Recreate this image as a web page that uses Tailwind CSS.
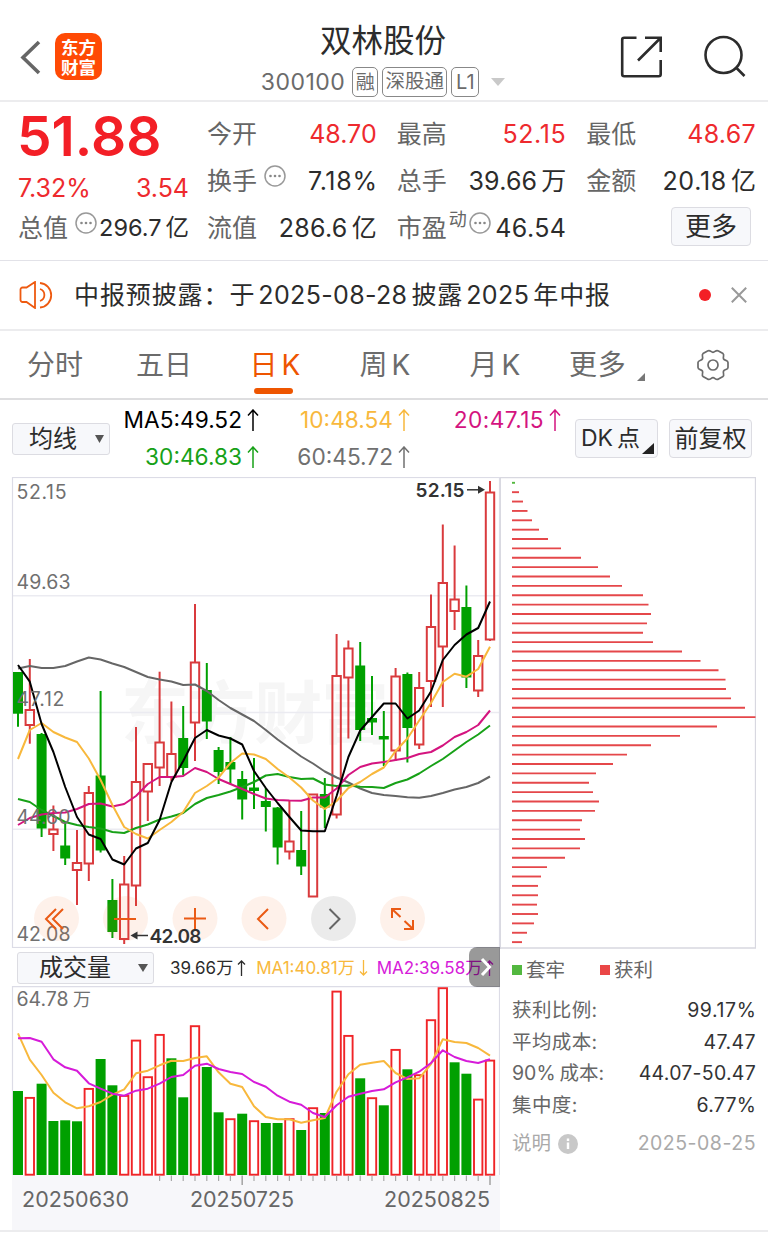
<!DOCTYPE html>
<html lang="zh-CN">
<head>
<meta charset="utf-8">
<title>双林股份 300100</title>
<script src="https://cdn.jsdelivr.net/npm/@tailwindcss/browser@4"></script>
</head>
<body class="w-[768px] h-[1241px] overflow-hidden bg-white font-['Inter','Noto_Sans_CJK_SC',sans-serif] font-[370] text-[#2c2c2c] flex flex-col leading-none whitespace-nowrap">

<!-- Title bar -->
<header class="h-[102px] shrink-0 border-b-2 border-[#ececee] flex justify-between">
  <div class="w-[199px] pt-[33px] pl-[20px] flex items-start">
    <svg class="w-[22px] h-[48px]" viewBox="0 0 22 48" fill="none" stroke="#666" stroke-width="3.6"><path d="M19 9 3 24.5 19 40"/></svg>
    <div class="ml-[13px] w-[47px] h-[47px] rounded-[10px] bg-[#ff4a05] text-white font-['Noto_Sans_CJK_SC',sans-serif] font-bold text-[17.5px] leading-[20px] flex flex-col items-center pt-[4px]"><span>东方</span><span>财富</span></div>
  </div>
  <div class="pt-[24px] flex flex-col items-center">
    <h1 class="text-[31.5px] leading-[34px]">双林股份</h1>
    <div class="mt-[9px] flex items-center h-[30px] text-[#6b6b6b]">
      <span class="text-[23px] tracking-[0.5px]">300100</span>
      <span class="ml-[7px] w-[26px] h-[30px] rounded-[5px] border-[1.5px] border-[#888] flex items-center justify-center text-[19px]">融</span>
      <span class="ml-[4px] w-[65px] h-[30px] rounded-[5px] border-[1.5px] border-[#888] flex items-center justify-center text-[19.5px]">深股通</span>
      <span class="ml-[4px] w-[28px] h-[30px] rounded-[5px] border-[1.5px] border-[#888] flex items-center justify-center text-[20px]">L1</span>
      <svg class="ml-[12px] w-[14px] h-[8px]" viewBox="0 0 14 8"><path d="M0 0h14L7 8z" fill="#c9c9c9"/></svg>
    </div>
  </div>
  <div class="w-[201px] pt-[34px] pr-[21px] flex justify-end items-start">
    <svg class="w-[44px] h-[44px]" viewBox="0 0 44 44" fill="none" stroke="#2c2c2c" stroke-width="2.6"><path d="M17.5 3.8H5.2a2 2 0 0 0-2 2v34.500a2 2 0 0 0 2 2h34.500a2 2 0 0 0 2-2V26M26 3.800h15.700V18M41 4.500 19 26.500"/></svg>
    <svg class="ml-[40px] w-[44px] h-[44px]" viewBox="0 0 44 44" fill="none" stroke="#2c2c2c" stroke-width="2.600"><circle cx="20.500" cy="21" r="18"/><path d="m32.500 33 9 9"/></svg>
  </div>
</header>

<!-- Quote summary -->
<section class="h-[159px] shrink-0 border-b border-[#e2e2e8] px-[18px] pr-[12px] flex text-[25px]">
  <div class="w-[171px] flex flex-col">
    <div class="h-[64px] mt-[2px] -ml-px text-[55px] leading-[64px] font-semibold text-[#f31f26]">51.88</div>
    <div class="h-[38px] mt-px flex items-center justify-between text-[#ee2a2e]"><span>7.32%</span><span>3.54</span></div>
    <div class="h-[42px] flex items-center justify-between">
      <span class="flex text-[#666]">总值<svg class="-mt-[4px] ml-[7px] w-[22px] h-[22px]" viewBox="0 0 22 22"><circle cx="11" cy="11" r="10" fill="none" stroke="#999" stroke-width="1.500"/><g fill="#888"><circle cx="6.500" cy="11" r="1.300"/><circle cx="11" cy="11" r="1.300"/><circle cx="15.500" cy="11" r="1.300"/></g></svg></span>
      <span class="text-[23.500px] flex gap-[4px]"><span>296.7</span><span>亿</span></span>
    </div>
  </div>
  <div class="ml-[18px] w-[549px] grid grid-cols-3 grid-rows-[47px_47px_47px] gap-x-[20px] pt-[9px] items-center">
    <div class="flex justify-between items-center"><span class="text-[#666]">今开</span><span class="text-[#ee2a2e]">48.70</span></div>
    <div class="flex justify-between items-center"><span class="text-[#666]">最高</span><span class="text-[#ee2a2e] tracking-[0.600px]">52.15</span></div>
    <div class="flex justify-between items-center"><span class="text-[#666]">最低</span><span class="text-[#ee2a2e] tracking-[0.300px]">48.67</span></div>
    <div class="flex justify-between items-center"><span class="flex text-[#666]">换手<svg class="-mt-[4px] ml-[7px] w-[22px] h-[22px]" viewBox="0 0 22 22"><circle cx="11" cy="11" r="10" fill="none" stroke="#999" stroke-width="1.500"/><g fill="#888"><circle cx="6.500" cy="11" r="1.300"/><circle cx="11" cy="11" r="1.300"/><circle cx="15.500" cy="11" r="1.300"/></g></svg></span><span class="tracking-[0.700px] -mr-[1px]">7.18%</span></div>
    <div class="flex justify-between items-center"><span class="text-[#666]">总手</span><span class="flex gap-[4px]"><span class="tracking-[0.200px]">39.66</span><span>万</span></span></div>
    <div class="flex justify-between items-center"><span class="text-[#666]">金额</span><span class="flex gap-[4px]"><span class="tracking-[0.700px]">20.18</span><span>亿</span></span></div>
    <div class="flex justify-between items-center"><span class="text-[#666]">流值</span><span class="flex gap-[4px]"><span class="tracking-[0.300px]">286.6</span><span>亿</span></span></div>
    <div class="flex justify-between items-center"><span class="flex text-[#666]">市盈<span class="text-[18px] ml-[2px] -mt-[5px]">动</span><svg class="-mt-[4px] ml-[2px] w-[22px] h-[22px]" viewBox="0 0 22 22"><circle cx="11" cy="11" r="10" fill="none" stroke="#999" stroke-width="1.500"/><g fill="#888"><circle cx="6.500" cy="11" r="1.300"/><circle cx="11" cy="11" r="1.300"/><circle cx="15.500" cy="11" r="1.300"/></g></svg></span><span class="tracking-[0.400px]">46.54</span></div>
    <div class="flex justify-end pr-[5px]"><button class="w-[80px] h-[39px] -mt-[4px] rounded-[4px] border border-[#dcdce2] bg-[#f7f8fb] text-[26px]">更多</button></div>
  </div>
</section>

<!-- Announcement -->
<section class="h-[70px] shrink-0 border-b-2 border-[#ececee] flex items-center pl-[19px] pr-[21px]">
  <svg class="w-[34px] h-[28px]" viewBox="0 0 34 28" fill="none" stroke="#ee5a10" stroke-width="1.800"><path d="M16 1v26l-8.500-6H3.500a2 2 0 0 1-2-2V8.500a2 2 0 0 1 2-2h4zM21 8a6.300 6.300 0 0 1 0 12M21 2a12.300 12.300 0 0 1 0 24.500"/></svg>
  <p class="ml-[21px] text-[25px] flex"><span class="tracking-[0.900px]">中报预披露：于</span><span class="ml-[3px] tracking-[0.350px]">2025-08-28</span><span class="ml-[4px] tracking-[0.900px]">披露</span><span class="ml-[3px] tracking-[0.400px]">2025</span><span class="ml-[4px] tracking-[0.900px]">年中报</span></p>
  <span class="ml-auto w-[12px] h-[12px] rounded-full bg-[#f31f26]"></span>
  <svg class="ml-[20px] w-[16px] h-[16px]" viewBox="0 0 16 16" stroke="#999" stroke-width="2"><path d="m.8.8 14.400 14.400M15.200.8.800 15.200"/></svg>
</section>

<!-- Period tabs -->
<nav class="h-[69px] shrink-0 border-b-2 border-[#dedee0] flex text-[28px] text-[#6b6b6b] leading-[69px]">
  <span class="w-[110px] text-center">分时</span>
  <span class="w-[108px] text-center">五日</span>
  <span class="w-[114px] flex flex-col items-center text-[#ee5500]"><span class="h-[57px] flex gap-[4px]"><span>日</span><span>K</span></span><i class="block w-[39px] h-[6px] rounded-full bg-[#ee5500] mr-[3px]"></i></span>
  <span class="w-[106px] flex justify-center gap-[4px]"><span>周</span><span>K</span></span>
  <span class="w-[114px] flex justify-center gap-[4px]"><span>月</span><span>K</span></span>
  <span class="w-[96px] pl-[17px] flex tracking-[0.800px]">更多<svg class="ml-[10px] mt-[42px] w-[8px] h-[8px] shrink-0" viewBox="0 0 8 8"><path d="M8 0v8H0z" fill="#777"/></svg></span>
  <svg class="ml-[48px] mt-[17px] w-[34px] h-[34px]" viewBox="-17 -17 34 34" fill="none" stroke="#6b6b6b" stroke-width="1.700" stroke-linejoin="round"><circle r="5"/><path d="M-5.500-14c2.500-1.800 3.500 1.300 5.500 1.300S3-15.800 5.500-14l4.500 2.600c1.800 1.500-.5 3.500.6 5.400s4.400 1 4.400 3.500v5c0 2.500-3.300 1.500-4.400 3.500s1.200 3.900-.6 5.400L5.500 14C3 15.800 2 12.700 0 12.700S-3 15.800-5.500 14l-4.500-2.600c-1.800-1.500.5-3.500-.6-5.400s-4.400-1-4.400-3.500v-5c0-2.500 3.300-1.500 4.400-3.500s-1.200-3.900.6-5.400z"/></svg>
</nav>

<!-- Moving averages legend -->
<section class="h-[77px] shrink-0 flex pl-[12px] pr-[16px]">
  <button class="mt-[23px] w-[98px] h-[32px] rounded-[3px] border border-[#dcdce2] bg-[#f7f8fb] flex items-center pl-[16px] text-[24px]">均线<svg class="ml-[18px] w-[9px] h-[8px]" viewBox="0 0 9 8"><path d="M0 0h9L4.500 8z" fill="#555"/></svg></button>
  <div class="ml-[8px] w-[446px] pt-[2px] grid grid-cols-[141px_151px_151px] grid-rows-[37px_37px] text-[22.700px] items-center justify-items-end">
    <span class="text-black flex items-center">MA5:49.52<svg class="ml-[5px] w-[12px] h-[22px]" viewBox="0 0 12 22" fill="none" stroke="currentColor" stroke-width="1.500"><path d="M6 22V1M1 6.500 6 1l5 5.500"/></svg></span>
    <span class="text-[#f8b83c] flex items-center">10:48.54<svg class="ml-[5px] w-[12px] h-[22px]" viewBox="0 0 12 22" fill="none" stroke="currentColor" stroke-width="1.500"><path d="M6 22V1M1 6.500 6 1l5 5.500"/></svg></span>
    <span class="text-[#d4147f] flex items-center tracking-[0.400px]">20:47.15<svg class="ml-[5px] w-[12px] h-[22px]" viewBox="0 0 12 22" fill="none" stroke="currentColor" stroke-width="1.500"><path d="M6 22V1M1 6.500 6 1l5 5.500"/></svg></span>
    <span class="text-[#17a117] flex items-center">30:46.83<svg class="ml-[5px] w-[12px] h-[22px]" viewBox="0 0 12 22" fill="none" stroke="currentColor" stroke-width="1.500"><path d="M6 22V1M1 6.500 6 1l5 5.500"/></svg></span>
    <span class="text-[#707070] flex items-center">60:45.72<svg class="ml-[5px] w-[12px] h-[22px]" viewBox="0 0 12 22" fill="none" stroke="currentColor" stroke-width="1.500"><path d="M6 22V1M1 6.500 6 1l5 5.500"/></svg></span>
  </div>
  <button class="ml-auto mt-[19px] w-[83px] h-[39px] rounded-[4px] border border-[#dcdce2] bg-[#f7f8fb] flex items-center pl-[5px] text-[23px]"><span>DK</span><span class="ml-[4px]">点</span><svg class="ml-[2px] mt-[19px] w-[12px] h-[11px] shrink-0" viewBox="0 0 12 11"><path d="M12 0v11H0z" fill="#222"/></svg></button>
  <button class="ml-[11px] mt-[19px] w-[83px] h-[39px] rounded-[4px] border border-[#dcdce2] bg-[#f7f8fb] text-[24px]">前复权</button>
</section>

<!-- Charts -->
<main class="h-[753px] shrink-0 flex">
  <div class="w-[500px] flex flex-col relative">
    <svg id="kline" class="w-[500px] h-[471px] shrink-0" viewBox="0 477 500 471"></svg>
    <div class="h-[38px] shrink-0 flex items-center pt-[2px] pl-[17px] border-r border-[#e4e4ec]">
      <button class="w-[137px] h-[32px] rounded-[3px] border border-[#dcdce2] bg-[#f7f8fb] flex items-center pl-[21px] text-[24px] shrink-0">成交量<svg class="ml-[27px] w-[10px] h-[8px]" viewBox="0 0 10 8"><path d="M0 0h10L5 8z" fill="#555"/></svg></button>
      <span class="ml-[16px] text-[17px] flex items-center"><span>39.66万</span><svg class="ml-[4px] w-[9px] h-[16px]" viewBox="0 0 9 16" fill="none" stroke="currentColor" stroke-width="1.300"><path d="M4.500 16V1M1 4.500 4.500 1 8 4.500"/></svg></span>
      <span class="ml-[10px] text-[17px] flex items-center text-[#f8b83c]"><span>MA1:40.81万</span><svg class="ml-[4px] w-[9px] h-[16px]" viewBox="0 0 9 16" fill="none" stroke="currentColor" stroke-width="1.300"><path d="M4.500 0v15M1 11.500 4.500 15 8 11.500"/></svg></span>
      <span class="ml-[9px] text-[17px] flex items-center text-[#d61bd9]"><span>MA2:39.58万</span><svg class="ml-[3px] w-[9px] h-[16px]" viewBox="0 0 9 16" fill="none" stroke="currentColor" stroke-width="1.300"><path d="M4.500 16V1M1 4.500 4.500 1 8 4.500"/></svg></span>
    </div>
    <div class="absolute left-[469px] top-[470px] w-[31px] h-[40px] rounded-l-[8px] bg-black/40 flex items-center justify-center"><svg class="w-[12px] h-[20px] ml-[3px]" viewBox="0 0 12 20" fill="none" stroke="#fff" stroke-width="3"><path d="m2 2 7.500 8L2 18"/></svg></div>
    <svg id="volume" class="w-[500px] h-[244px] shrink-0" viewBox="0 986 500 244"></svg>
  </div>
  <aside class="w-[256px] flex flex-col">
    <svg id="chips" class="w-[256px] h-[472px] shrink-0" viewBox="500 477 256 472"></svg>
    <div class="pl-[12px] h-[42px] flex items-center text-[19.500px] text-[#666]">
      <i class="w-[10px] h-[10px] bg-[#53b83f]"></i><span class="ml-[4px] pt-px">套牢</span>
      <i class="ml-[35px] w-[10px] h-[10px] bg-[#ea4747]"></i><span class="ml-[4px] pt-px">获利</span>
    </div>
    <dl class="pl-[12px] pt-[4px] text-[19.500px] text-[#666]">
      <div class="h-[31.500px] flex items-center justify-between"><dt class="tracking-[0.400px]">获利比例:</dt><dd class="text-[#333] tracking-[0.600px] -mr-[0.500px]">99.17%</dd></div>
      <div class="h-[31.500px] flex items-center justify-between"><dt class="tracking-[0.400px]">平均成本:</dt><dd class="text-[#333] tracking-[0.400px]">47.47</dd></div>
      <div class="h-[31.500px] flex items-center justify-between"><dt class="flex"><span>90%</span><span class="ml-[4px]">成本:</span></dt><dd class="text-[#333] tracking-[0.250px]">44.07-50.47</dd></div>
      <div class="h-[31.500px] flex items-center justify-between"><dt class="tracking-[0.400px]">集中度:</dt><dd class="text-[#333] tracking-[0.200px]">6.77%</dd></div>
      <div class="h-[46px] flex items-center justify-between text-[#aaa]"><dt class="flex items-center">说明<svg class="ml-[7px] w-[20px] h-[20px]" viewBox="0 0 20 20"><circle cx="10" cy="10" r="10" fill="#c8c8c8"/><path d="M10 4.500v2.500M10 8.500v6.500" stroke="#fff" stroke-width="2.400"/></svg></dt><dd class="tracking-[0.500px]">2025-08-25</dd></div>
    </dl>
  </aside>
</main>
<div class="h-[2px] bg-[#ececee] shrink-0"></div>

<script>
const RED = '#d93a3d', GREEN = '#00a000', VRED = '#f02427';
const X = i => 18 + i * 11.8;
// [rising?, high, body top, body bottom, low]
const candles = [
 [0,672,672,713.7,726.7],[1,659,710,725,743.7],[0,733,734,828.5,837],[1,805.5,829.5,834,851],[0,822,845.5,858.5,865],
 [1,830,863,870,905],[1,786,793,863.5,881],[0,691,775.5,850.5,852.5],[0,879,900,932,938],[1,856,884.5,939,944],
 [1,727,782,885.5,906],[1,763,764,791.5,821],[1,671.7,742.5,767.5,786],[1,701.5,754,777,781],[0,706,738,768,775],
 [1,604,662.5,722.5,761],[0,663,690,721.5,739],[0,747,750,772,784],[0,737,762,769.5,784],[0,771,779,799.5,819.5],
 [0,758,787.5,791,809],[0,788,801,807,831.5],[0,807,807.5,847.5,864.5],[1,800,841.5,851.5,859.5],[0,811,850,866.5,875],
 [1,794.5,794.5,896.5,896.5],[0,778,794,807.5,828],[1,634,676,814.5,818.5],[1,640.5,648.5,677.5,738.5],[0,642,665.5,730,741],
 [0,676,718,722.5,735],[0,711,736,739.5,766],[1,668,676.5,750.5,761],[0,672.5,674,728,762.5],[1,672,688,744.5,749],
 [1,594.5,627,681,707],[1,524.5,583,646.5,707],[1,545.5,599.5,611,630],[0,585.5,607,677.5,688],[1,640,656,690.5,697],[1,481,492.5,639.5,641]];
const ma = {
 '#666666':[668.5,666,668,668,666,661.5,657.5,659.5,663.5,667,672,677,679.5,681.5,685,684.5,691,700,708,714.5,721,730,739.5,748,756.5,763.5,771.5,777.5,782.5,788.5,793,795,796,797.3,797.7,796,793,789.5,787,783,776.5],
 '#17a117':[799,802,810,816,822,825,827,828.5,832,833,828,824.5,819.5,816.5,813,804,798,795,791.5,787,782,775.5,774,777,779,778.5,784.5,786,785.5,786.7,787,788,783,779.5,773.5,766,759,750.5,742,734.5,725.5],
 '#d4147f':[825,818,814.5,813,812.5,809,804,803.5,806.5,804,796,784,777,777,776,768,772,779,784,789,794,798.5,800,800.5,800.7,797.5,797.5,788.5,775,767,763.5,762,760,758,754,752,745.5,737,732,725,710.5],
 '#f8b83c':[759,730,723,732,737.5,742,758.5,780,805,827,834,838.5,830,822,812,793,786,777.5,763,753.5,754.5,759,769,777.5,787.5,800.5,809,801,788,782,774,767.5,751,738.5,720.5,703,682,673.7,676.7,669,646.7],
 '#000000':[665,681.7,724,752,787,817,834.5,839,859.5,864.5,848.5,843,820,782,761,738,730,735.5,738.5,744.5,771,788,803,817,830.5,831.3,831.3,796,757,730.5,717,703.5,703.5,718.5,710.5,691.5,660,645,634.5,628,601.5]};
const vol = [1091,1097,1083.7,1121,1120.3,1121.3,1088,1059,1085.3,1095,1039.7,1076.3,1034,1058.3,1097.3,1025.3,1067,1112.3,1118.3,1113.7,1120.3,1123,1123,1118.3,1130,1107.3,1113,990.7,1035,1078.3,1097.3,1105.3,1049,1069.3,1074.3,1019.3,987.3,1062.3,1073.7,1098.7,1059.7];
const volUp = new Set([1,6,9,10,11,12,15,18,20,23,25,27,28,30,32,34,35,36,39,40]);
const vma = {
 '#f8b83c':[1033.3,1059.7,1075,1092.7,1102.3,1108.3,1106.3,1102,1094.7,1089.3,1073.3,1070.7,1065.3,1060.7,1061,1058,1056.3,1072.3,1083.7,1087,1106.3,1117,1119.3,1119.3,1122.7,1120.3,1118,1091.7,1074.3,1064.7,1062.7,1061,1073,1079,1078.3,1064,1039.3,1042,1043,1048,1055.7],
 '#d61bd9':[1038.3,1038,1041.7,1059.3,1067.3,1070.7,1083.3,1088.7,1093.7,1095.7,1090.7,1088.7,1083.7,1077,1075,1065.7,1063.7,1069,1072,1074,1082,1086.7,1095.7,1101.7,1104.7,1113,1117,1105.3,1096.7,1093.7,1091,1089.3,1082.3,1077.3,1071.7,1063,1050.3,1057,1061,1063,1059.3]};
const chips = [3,7,11,15.5,20,27,36,49,69,86,98,110,131,136.5,139,135,131,141,170,188.5,206.5,213.5,214,219,233,243.5,205,168,139,115,101,84,77,81,87,83,70,68,73,68,53,35,29,26,26,25,26,22,15,10];

const line = (x1,y1,x2,y2,c,w=1.5) => `<path d="M${x1} ${y1}L${x2} ${y2}" stroke="${c}" stroke-width="${w}" fill="none"/>`;
const poly = (pts,c,w=2) => `<polyline points="${pts.map((y,i)=>X(i)+','+y).join(' ')}" fill="none" stroke="${c}" stroke-width="${w}" stroke-linejoin="round"/>`;
const text = (x,y,s,len,size,c,extra='') => `<text x="${x}" y="${y}" font-size="${size}" fill="${c}" textLength="${len}" ${extra}>${s}</text>`;

// Candlestick chart
let k = '';
k += text(121,738,'东方财富',268,68,'#f6f6f6','font-weight="700"');
[595.8,712.5,829.3].forEach(y => k += line(12.5,y,499.5,y,'#ebebf1',1.6));
k += '<rect x="12.500" y="477.500" width="487" height="470" fill="none" stroke="#dcdce6" stroke-width="1.200"/>';
candles.forEach(([up,h,t,b,l],i) => {
  const x = X(i);
  if (up) k += line(x,h,x,t,RED,2) + line(x,b,x,l,RED,2) + `<rect x="${x-4.2}" y="${t}" width="8.400" height="${b-t}" fill="none" stroke="${RED}" stroke-width="2"/>`;
  else k += line(x,h,x,l,GREEN,2) + `<rect x="${x-5}" y="${t}" width="10" height="${b-t}" fill="${GREEN}"/>`;
});
for (const c in ma) k += poly(ma[c],c);
k += text(16.5,498.5,'52.15',50,19.5,'#707070') + text(16.5,588.5,'49.63',54,19.5,'#707070') + text(16.5,706,'47.12',48,19.5,'#707070')
   + text(16.5,823.5,'44.60',54,19.5,'#707070') + text(16.5,941,'42.08',54,19.5,'#707070');
[56.5,125.5,195,264,333.5,402.5].forEach((x,i) => k += `<circle cx="${x}" cy="918.500" r="22.500" fill="${i==4?'rgba(0,0,0,.08)':'rgba(240,110,30,.095)'}"/>`);
const O = '#ea5a14';
k += `<g fill="none" stroke="${O}" stroke-width="2"><path d="M56 909l-10 10 10 10M63 909l-10 10 10 10M114 919h22M184 918.500h22M195 908v21"/><path d="M268 909l-10 10 10 10"/></g>`;
k += '<path d="M329.500 909l10 10-10 10" fill="none" stroke="#666" stroke-width="2"/>';
k += `<path d="M401 909h-9v9M392.500 909.500l8 7.500M404 929h9v-9M412.500 928.500l-8-7.500" fill="none" stroke="${O}" stroke-width="2"/>`;
k += text(415.5,497,'52.15',49,19,'#333','font-weight="560"') + line(467,489.800,482,489.800,'#333',1.5) + '<path d="M485 489.800l-7-4v8z" fill="#333"/>';
k += text(149.5,943,'42.08',52,19,'#333','font-weight="560"') + line(134,935.500,148,935.500,'#333',1.5) + '<path d="M130.500 935.500l7-4v8z" fill="#333"/>';
document.getElementById('kline').innerHTML = k;

// Volume chart
let v = '<rect x="12" y="1175" width="488" height="55" fill="#f7f7fa"/>';
v += '<path d="M12.500 1175V986.600H499.500V1175" fill="none" stroke="#dcdce6" stroke-width="1.200"/>';
v += text(16.5,1006,'64.78',52,19.5,'#707070') + text(73,1006,'万',18,18,'#707070');
vol.forEach((t,i) => {
  const x = X(i);
  v += volUp.has(i) ? `<rect x="${x-4.2}" y="${t+.9}" width="8.400" height="${1173.8-t}" fill="#fff" stroke="${VRED}" stroke-width="1.900"/>`
                    : `<rect x="${x-5}" y="${t}" width="10" height="${1175-t}" fill="${GREEN}"/>`;
  if (i > 11) v += line(x,1175.5,x,(i==19||i==40)?1185:1181,'#a8a8a8',(i==19||i==40)?1.6:1.2);
});
for (const c in vma) v += poly(vma[c],c,2);
v += text(22,1206.5,'20250630',107,21.5,'#666') + text(190,1206.5,'20250725',104,21.5,'#666') + text(384,1206.5,'20250825',106,21.5,'#666');
document.getElementById('volume').innerHTML = v;

// Chip distribution
let c = '<path d="M500 477.700H755.500V948H500M500.300 478V949" fill="none" stroke="#d8d8e0" stroke-width="1.300"/>';
chips.forEach((w,i) => c += line(512,482.8+i*9.374,512+w,482.8+i*9.374,i?'#e5474a':'#53b83f',1.9));
document.getElementById('chips').innerHTML = c;
</script>
</body>
</html>
